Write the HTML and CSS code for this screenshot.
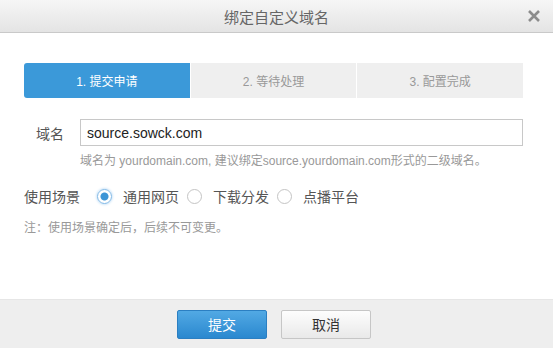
FILE: index.html
```html
<!DOCTYPE html>
<html lang="zh-CN">
<head>
    <meta charset="UTF-8">
    <title>绑定自定义域名</title>
    <link rel="stylesheet" href="styles.css">
</head>
<body>
    <div class="dialog">
        <div class="dialog-head">
            <span class="dialog-title">绑定自定义域名</span>
            <svg class="dialog-close" width="14" height="14" viewBox="0 0 14 14">
                <path d="M2 2 L12 12 M12 2 L2 12" stroke="#8c8c8c" stroke-width="2.6" fill="none"/>
            </svg>
        </div>

        <div class="dialog-body">
            <!-- 步骤条 -->
            <div class="steps">
                <div class="step active">1. 提交申请</div>
                <div class="step">2. 等待处理</div>
                <div class="step">3. 配置完成</div>
            </div>

            <div class="form-row">
                <label class="form-label">域名</label>
                <input class="form-input" type="text" value="source.sowck.com">
            </div>
            <p class="form-hint">域名为 yourdomain.com, 建议绑定source.yourdomain.com形式的二级域名。</p>

            <div class="scene-row">
                <span class="scene-label">使用场景</span>
                <label class="radio checked"><span class="radio-dot"></span>通用网页</label>
                <label class="radio"><span class="radio-dot"></span>下载分发</label>
                <label class="radio"><span class="radio-dot"></span>点播平台</label>
            </div>
            <p class="note">注：使用场景确定后，后续不可变更。</p>
        </div>

        <div class="dialog-foot">
            <button class="btn btn-primary">提交</button>
            <button class="btn">取消</button>
        </div>
    </div>
</body>
</html>
```

FILE: styles.css
```css
/* 基础 */
body {
    margin: 0;
    font-family: "Liberation Sans", "Noto Sans CJK SC", sans-serif;
    color: #333;
    background: #fff;
}

.dialog {
    display: flex;
    flex-direction: column;
    height: 100vh;
}

/* 标题栏 */
.dialog-head {
    height: 32px;
    display: flex;
    align-items: center;
    justify-content: center;
    position: relative;
    background: linear-gradient(#f6f6f6, #e4e4e4);
    border-bottom: 1px solid #c9c9c9;
}

.dialog-title {
    font-size: 15px;
    color: #666;
}

.dialog-close {
    position: absolute;
    right: 12px;
    top: 9px;
}

.dialog-body {
    flex: 1;
    padding: 30px 30px 0 24px;
}

/* 步骤条 */
.steps {
    display: grid;
    grid-template-columns: 1fr 1fr 1fr;
    gap: 1px;
    height: 35px;
}

.step {
    display: flex;
    align-items: center;
    justify-content: center;
    background: #efefef;
    color: #999;
    font-size: 12px;
}

.step.active {
    background: #3b99d9;
    color: #fff;
    border-radius: 3px 0 0 3px;
}

/* 表单 */
.form-row {
    display: flex;
    align-items: center;
    margin-top: 21px;
}

.form-label {
    width: 40px;
    padding-right: 16px;
    text-align: right;
    font-size: 14px;
    color: #555;
}

.form-input {
    flex: 1;
    height: 27px;
    box-sizing: border-box;
    border: 1px solid #c8c8c8;
    padding: 0 6px;
    font-family: "Liberation Sans", "Noto Sans CJK SC", sans-serif;
    font-size: 14px;
    color: #222;
    outline: none;
}

.form-hint {
    margin: 6px 0 0 56px;
    font-size: 12px;
    line-height: 18px;
    color: #999;
}

.scene-row {
    display: flex;
    align-items: center;
    margin-top: 16px;
    height: 20px;
    font-size: 14px;
    color: #555;
}

.scene-label {
    width: 56px;
    margin-right: 17px;
}

.radio {
    display: flex;
    align-items: center;
    gap: 11px;
    margin-right: 8px;
}

.radio-dot {
    width: 13px;
    height: 13px;
    border: 1px solid #c4c4c4;
    border-radius: 50%;
    background: #fff;
    box-sizing: content-box;
}

.radio.checked .radio-dot {
    border-color: #7fb8e6;
    box-shadow: 0 0 3px #9cc9ef;
    background: radial-gradient(circle, #3d95d6 3.5px, #fff 4.5px);
}

.note {
    margin: 13px 0 0;
    font-size: 12px;
    line-height: 18px;
    color: #999;
}

/* 底部按钮 */
.dialog-foot {
    height: 48px;
    display: flex;
    align-items: center;
    justify-content: center;
    gap: 14px;
    padding-right: 5px;
    background: #eeeeee;
    border-top: 1px solid #e6e6e6;
}

.btn {
    width: 90px;
    height: 29px;
    font-family: "Liberation Sans", "Noto Sans CJK SC", sans-serif;
    font-size: 14px;
    color: #333;
    border: 1px solid #c6c6c6;
    border-radius: 2px;
    background: linear-gradient(#fdfdfd, #e9e9e9);
}

.btn-primary {
    color: #fff;
    border-color: #2b7fc2;
    background: linear-gradient(#52a9e4, #2a88cf);
}
```
